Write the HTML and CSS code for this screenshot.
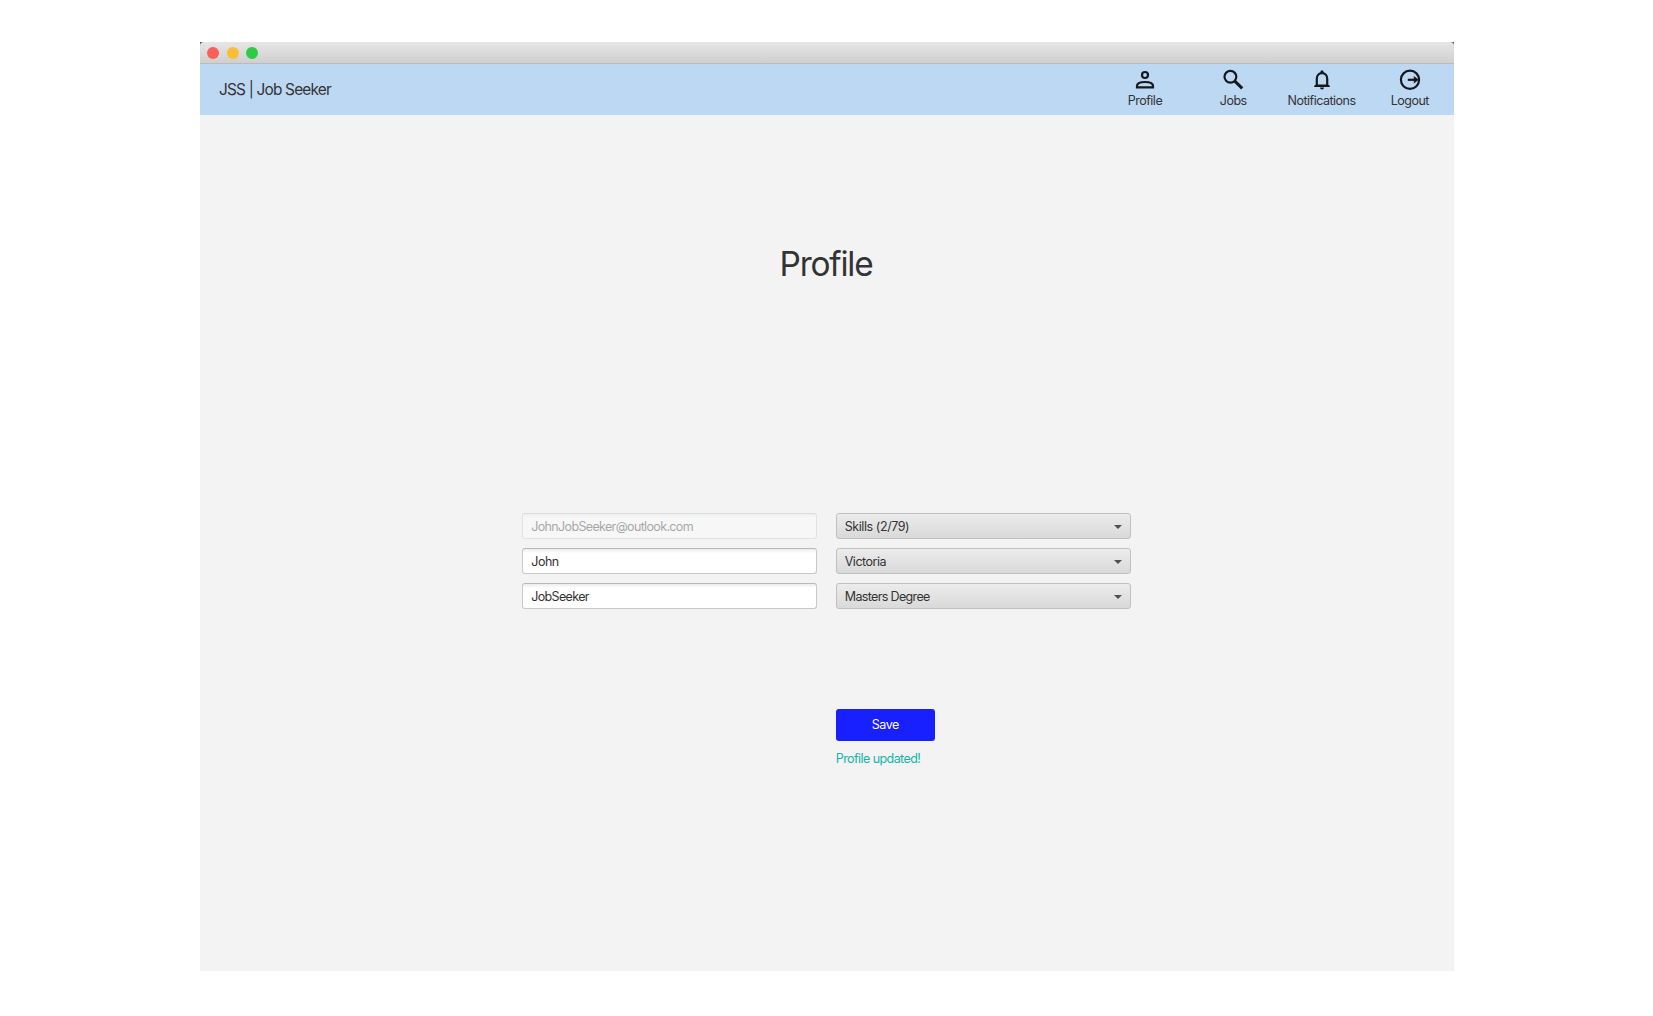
FILE: index.html
```html
<!DOCTYPE html>
<html lang="en">
<head>
<meta charset="utf-8">
<title>JSS | Job Seeker</title>
<link rel="stylesheet" href="styles.css">
</head>
<body>
<div class="window">
  <header class="titlebar">
    <span class="light light-close"></span>
    <span class="light light-min"></span>
    <span class="light light-max"></span>
  </header>
  <nav class="navbar">
    <span class="brand">JSS | Job Seeker</span>
    <div class="nav-items">
      <a class="nav-item">
        <svg class="icon" viewBox="0 0 22 22"><circle cx="11" cy="6" r="3"/><path d="M3 18.4V17c0-2.8 4.2-4 8-4s8 1.2 8 4v1.4z"/></svg>
        <span class="nav-label">Profile</span>
      </a>
      <a class="nav-item">
        <svg class="icon" viewBox="0 0 22 22"><circle cx="8.4" cy="7.8" r="5.9"/><path class="thick" d="M12.8 12.2l7.4 7.2"/></svg>
        <span class="nav-label">Jobs</span>
      </a>
      <a class="nav-item">
        <svg class="icon" viewBox="0 0 22 22"><path d="M5.8 16.8V9.8c0-3.4 2.1-5.6 5.2-5.6s5.2 2.2 5.2 5.6v7"/><path class="solid" d="M9.4 4V2.9a1.6 1.6 0 0 1 3.2 0V4zM9 18.6h4a2 2 0 0 1-4 0zM3.2 18v-1.2l2-1.4h11.6l2 1.4V18z"/></svg>
        <span class="nav-label">Notifications</span>
      </a>
      <a class="nav-item">
        <svg class="icon" viewBox="0 0 22 22"><circle cx="11" cy="10.8" r="9.1"/><path d="M8.8 10.8H16"/><path class="solid" d="M14.8 7l5 3.8-5 3.8z"/></svg>
        <span class="nav-label">Logout</span>
      </a>
    </div>
  </nav>
  <main class="content">
    <h1 class="heading">Profile</h1>
    <form class="form">
      <div class="field field-disabled"><span class="text-tight">JohnJobSeeker@outlook.com</span></div>
      <div class="select"><span class="text-loose">Skills (2/79)</span><i class="arrow"></i></div>
      <div class="field"><span>John</span></div>
      <div class="select"><span>Victoria</span><i class="arrow"></i></div>
      <div class="field"><span class="text-tight">JobSeeker</span></div>
      <div class="select"><span class="text-tight">Masters Degree</span><i class="arrow"></i></div>
      <div class="actions">
        <button class="save" type="button">Save</button>
        <span class="message">Profile updated!</span>
      </div>
    </form>
  </main>
</div>
</body>
</html>
```
FILE: styles.css
```css
* { box-sizing: border-box; }
body {
  margin: 0;
  padding-top: 42px;
  background: #fff;
  color: #333;
  font: 12.5px/16px Inter, "Liberation Sans", sans-serif;
  letter-spacing: -0.5px;
}
.window {
  width: 1254px;
  height: 929px;
  margin-left: 200px;
  display: flex;
  flex-direction: column;
  background: #555;
}
.titlebar {
  height: 22px;
  padding-left: 7px;
  display: flex;
  align-items: center;
  gap: 7.5px;
  border-radius: 4px 4px 0 0;
  border-bottom: 1px solid #b9bbbd;
  background: linear-gradient(#e6e6e6, #cfcfcf);
}
.light { width: 12px; height: 12px; border-radius: 50%; }
.light-close { background: #fc5f58; }
.light-min { background: #fabd37; }
.light-max { background: #2fcb46; }
.navbar {
  height: 51px;
  padding-left: 19px;
  display: flex;
  align-items: center;
  justify-content: space-between;
  background: #bdd8f3;
}
.brand { font-size: 15.4px; line-height: 20px; letter-spacing: -0.8px; padding-top: 1px; }
.nav-items { display: flex; }
.nav-item {
  width: 88.3px;
  height: 51px;
  padding-top: 5px;
  display: flex;
  flex-direction: column;
  align-items: center;
}
.icon { width: 22px; height: 22px; fill: none; stroke: #15191d; stroke-width: 2.2; }
.icon .thick { stroke-width: 3; }
.icon .solid { fill: #15191d; stroke: none; }
.nav-label { margin-top: 2px; }
.content {
  flex: 1;
  padding-top: 126px;
  display: flex;
  flex-direction: column;
  align-items: center;
  background: #f3f3f3;
}
.heading { margin: 0 2px 0 0; font-size: 33.4px; line-height: 46px; font-weight: 400; letter-spacing: -1.2px; }
.form {
  margin: 226px 1px 0 0;
  display: grid;
  grid-template-columns: 295px 295px;
  grid-auto-rows: 26px;
  column-gap: 18.5px;
  row-gap: 9.2px;
}
.field, .select {
  padding: 1px 8px 0;
  display: flex;
  align-items: center;
  border: 1px solid #c9c9c9;
  border-radius: 3px;
}
.text-tight { letter-spacing: -0.65px; }
.text-loose { letter-spacing: -0.43px; }
.field { background: linear-gradient(#ececec, #fff 4px); border-top-color: #b8b8b8; }
.field-disabled { opacity: .4; }
.select { justify-content: space-between; border-color: #c0c0c0; background: linear-gradient(#ececec, #d9d9d9); }
.arrow { border: 4px solid transparent; border-top: 4.5px solid #505050; border-bottom: 0; }
.actions {
  grid-column: 2;
  padding-top: 90.4px;
  display: flex;
  flex-direction: column;
  align-items: flex-start;
}
.save {
  flex: none;
  width: 99px;
  height: 32px;
  padding: 1px 0 0;
  border: 0;
  border-radius: 3px;
  background: #1820ff;
  color: #fff;
  font: inherit;
  letter-spacing: -0.5px;
}
.message { margin-top: 10px; color: #14b5a9; letter-spacing: -0.57px; white-space: nowrap; }
```
